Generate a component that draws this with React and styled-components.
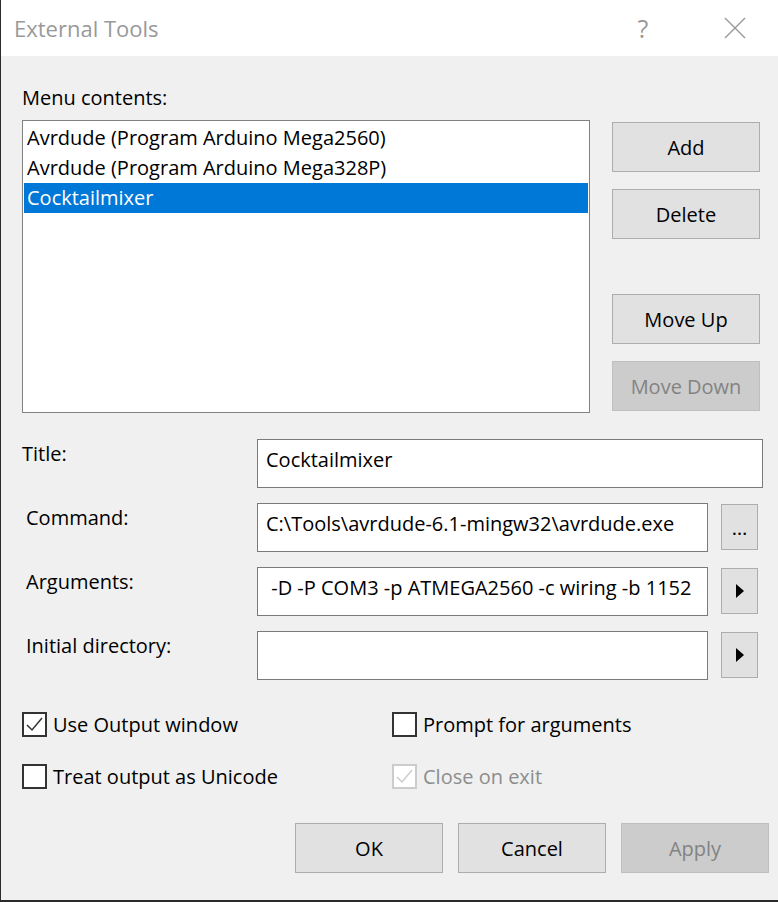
import React from 'react'
import styled, { createGlobalStyle } from 'styled-components'

const Global = createGlobalStyle`
  html, body {
    margin: 0;
    padding: 0;
    background: #f0f0f0;
  }
  * { box-sizing: border-box; }
`

const Window = styled.div`
  width: 778px;
  height: 902px;
  background: #f0f0f0;
  border-left: 1px solid #2b2b2b;
  border-bottom: 2px solid #2b2b2b;
  font-family: "Open Sans", "Noto Sans", sans-serif;
  font-size: 20px;
  color: #000;
  display: flex;
  flex-direction: column;
`

const TitleBar = styled.div`
  height: 56px;
  background: #fff;
  display: flex;
  align-items: center;
  padding-left: 13px;
  color: #999;
  font-size: 22px;
`

const TitleText = styled.div`
  flex: 1;
`

const TitleIcon = styled.div`
  width: ${p => p.$w}px;
  display: flex;
  justify-content: center;
  align-items: center;
  color: #999;
  font-size: 25px;
`

const Body = styled.div`
  padding: 28px 0 0 21px;
  display: flex;
  flex-direction: column;
`

const SectionLabel = styled.div`
  height: 36px;
`

const TopRow = styled.div`
  display: flex;
  gap: 22px;
`

const ListBox = styled.div`
  width: 568px;
  height: 293px;
  background: #fff;
  border: 1px solid #828282;
  padding: 2px 1px;
`

const ListItem = styled.div`
  height: 30px;
  line-height: 30px;
  padding-left: 3px;
  white-space: nowrap;
  background: ${p => (p.$selected ? '#0078d7' : 'transparent')};
  color: ${p => (p.$selected ? '#fff' : '#000')};
`

const SideButtons = styled.div`
  display: flex;
  flex-direction: column;
  padding-top: 2px;
`

const Button = styled.div`
  width: ${p => p.$w || 148}px;
  height: ${p => p.$h || 50}px;
  margin-top: ${p => p.$mt || 0}px;
  background: ${p => (p.$disabled ? '#cccccc' : '#e1e1e1')};
  border: 1px solid ${p => (p.$disabled ? '#bfbfbf' : '#adadad')};
  color: ${p => (p.$disabled ? '#838383' : '#000')};
  display: flex;
  align-items: center;
  justify-content: center;
  flex-shrink: 0;
`

const Form = styled.div`
  display: flex;
  flex-direction: column;
  gap: 15px;
  margin-top: 26px;
`

const FieldRow = styled.div`
  display: flex;
  align-items: flex-start;
`

const FieldLabel = styled.div`
  width: 235px;
  padding-left: ${p => p.$indent || 0}px;
  padding-top: 1px;
  white-space: nowrap;
`

const TextBox = styled.div`
  width: ${p => p.$w}px;
  height: 49px;
  background: #fff;
  border: 1px solid #7a7a7a;
  padding: 6px 0 0 8px;
  white-space: nowrap;
  overflow: hidden;
`

const SmallButton = styled(Button)`
  margin-left: 13px;
  margin-top: 1px;
`

const Checks = styled.div`
  display: grid;
  grid-template-columns: 370px 1fr;
  row-gap: 27px;
  margin-top: 32px;
`

const CheckItem = styled.div`
  height: 25px;
  display: flex;
  align-items: center;
  gap: 6px;
  white-space: nowrap;
  color: ${p => (p.$disabled ? '#8d8d8d' : '#000')};
`

const Box = styled.div`
  width: 25px;
  height: 25px;
  border: 2px solid ${p => (p.$disabled ? '#cccccc' : '#333')};
  background: #fff;
  display: flex;
  align-items: center;
  justify-content: center;
`

const Footer = styled.div`
  display: flex;
  justify-content: flex-end;
  gap: 15px;
  margin-top: 34px;
  padding-right: 9px;
`

const Check = ({ checked, disabled, children }) => (
  <CheckItem $disabled={disabled}>
    <Box $disabled={disabled}>
      {checked && (
        <svg width="19" height="19" viewBox="0 0 19 19">
          <path d="M2 10 L7 15 L17 3" fill="none" stroke={disabled ? '#cccccc' : '#333'} strokeWidth="1.5" />
        </svg>
      )}
    </Box>
    {children}
  </CheckItem>
)

const Arrow = () => (
  <svg width="10" height="16" viewBox="0 0 10 16">
    <path d="M1 1 L9 8 L1 15 Z" fill="#000" />
  </svg>
)

const App = () => {
  return (
    <>
      <Global />
      <Window>
        <TitleBar>
          <TitleText>External Tools</TitleText>
          <TitleIcon $w={98}>?</TitleIcon>
          <TitleIcon $w={86}>
            <svg width="22" height="22" viewBox="0 0 22 22">
              <path d="M1 1 L21 21 M21 1 L1 21" stroke="#999" strokeWidth="1.4" />
            </svg>
          </TitleIcon>
        </TitleBar>
        <Body>
          <SectionLabel>Menu contents:</SectionLabel>
          <TopRow>
            <ListBox>
              <ListItem>Avrdude (Program Arduino Mega2560)</ListItem>
              <ListItem>Avrdude (Program Arduino Mega328P)</ListItem>
              <ListItem $selected>Cocktailmixer</ListItem>
            </ListBox>
            <SideButtons>
              <Button>Add</Button>
              <Button $mt={17}>Delete</Button>
              <Button $mt={55}>Move Up</Button>
              <Button $mt={17} $disabled>Move Down</Button>
            </SideButtons>
          </TopRow>
          <Form>
            <FieldRow>
              <FieldLabel>Title:</FieldLabel>
              <TextBox $w={506}>Cocktailmixer</TextBox>
            </FieldRow>
            <FieldRow>
              <FieldLabel $indent={4}>Command:</FieldLabel>
              <TextBox $w={451}>C:\Tools\avrdude-6.1-mingw32\avrdude.exe</TextBox>
              <SmallButton $w={37} $h={46}>…</SmallButton>
            </FieldRow>
            <FieldRow>
              <FieldLabel $indent={4}>Arguments:</FieldLabel>
              <TextBox $w={451}>&nbsp;-D -P COM3 -p ATMEGA2560 -c wiring -b 1152</TextBox>
              <SmallButton $w={37} $h={46}><Arrow /></SmallButton>
            </FieldRow>
            <FieldRow>
              <FieldLabel $indent={4}>Initial directory:</FieldLabel>
              <TextBox $w={451} />
              <SmallButton $w={37} $h={46}><Arrow /></SmallButton>
            </FieldRow>
          </Form>
          <Checks>
            <Check checked>Use Output window</Check>
            <Check>Prompt for arguments</Check>
            <Check>Treat output as Unicode</Check>
            <Check checked disabled>Close on exit</Check>
          </Checks>
          <Footer>
            <Button>OK</Button>
            <Button>Cancel</Button>
            <Button $disabled>Apply</Button>
          </Footer>
        </Body>
      </Window>
    </>
  )
}

export default App
